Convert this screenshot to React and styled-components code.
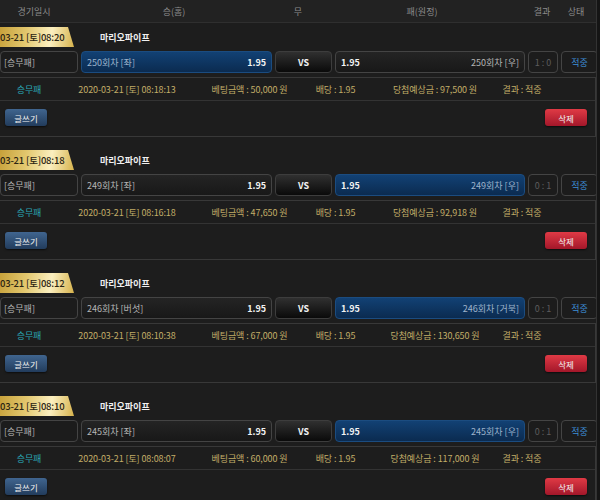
import React from "react";
import styled, { createGlobalStyle } from "styled-components";

const GlobalStyle = createGlobalStyle`
  html, body {
    margin: 0;
    padding: 0;
    background: #151515;
    font-family: "Noto Sans CJK KR", "Noto Sans", sans-serif;
  }
`;

const Page = styled.div`
  width: 596px;
  min-height: 500px;
  background: #1d1d1d;
  border-right: 1px solid #333;
  overflow: hidden;
`;

const Header = styled.div`
  display: grid;
  grid-template-columns: 68px 212px 36px 212px 28px 40px;
  height: 22px;
  align-items: center;
  background: #222;
  border-bottom: 1px solid #2f2f2f;
  font-size: 9px;
  color: #8c8c8c;
  text-align: center;
`;

const List = styled.div`
  display: flex;
  flex-direction: column;
  gap: 13px;
  padding-top: 4px;
`;

const Section = styled.div`
  display: flex;
  flex-direction: column;
  gap: 4px;
`;

const TabRow = styled.div`
  display: flex;
  align-items: center;
  height: 20px;
`;

const DateTab = styled.div`
  width: 74px;
  height: 20px;
  display: flex;
  align-items: center;
  font-size: 9.5px;
  font-weight: 500;
  letter-spacing: -0.2px;
  color: #2b2412;
  white-space: nowrap;
  overflow: hidden;
  clip-path: polygon(0 0, 68px 0, 74px 100%, 0 100%);
  background: linear-gradient(100deg, #c7a13a 0%, #e2c76e 35%, #fbefbf 68%, #d6b24c 100%);
`;

const GameTitle = styled.div`
  margin-left: 26px;
  font-size: 9px;
  font-weight: 700;
  color: #f0f0f0;
`;

const BetRow = styled.div`
  display: grid;
  grid-template-columns: 78px 191px 57px 190px 30px 37px;
  column-gap: 3px;
  height: 22px;
`;

const Cell = styled.div`
  box-sizing: border-box;
  display: flex;
  align-items: center;
  border: 1px solid #444;
  border-radius: 4px;
  background: #1c1c1c;
  font-size: 9px;
  color: #b5b5b5;
  padding: 0 ${(p) => (p.$tight ? "3px" : "5px")};
  white-space: nowrap;
`;

const TeamCell = styled(Cell)`
  justify-content: space-between;
  flex-direction: ${(p) => (p.$away ? "row-reverse" : "row")};
  background: ${(p) =>
    p.$picked
      ? "linear-gradient(to bottom, #124174, #0b2b50)"
      : "linear-gradient(to bottom, #242424, #181818)"};
  border-color: ${(p) => (p.$picked ? "#1b4c80" : "#444")};
  color: ${(p) => (p.$picked ? "#9fb4cc" : "#b5b5b5")};
`;

const Odds = styled.span`
  font-weight: 700;
  color: #f2f2f2;
`;

const VsCell = styled(Cell)`
  justify-content: center;
  font-weight: 700;
  color: #f2f2f2;
  background: linear-gradient(to bottom, #303030, #0a0a0a);
  border-color: #3d3d3d;
`;

const ScoreCell = styled(Cell)`
  justify-content: center;
  padding: 0;
  color: #5c5c5c;
`;

const StatusCell = styled(Cell)`
  justify-content: center;
  padding: 0;
  color: #3d8fd8;
`;

const DetailBox = styled.div`
  border: 1px solid #383838;
  border-left: none;
`;

const InfoRow = styled.div`
  display: grid;
  grid-template-columns: 58px 138px 107px 65px 134px 40px;
  height: 22px;
  align-items: center;
  border-bottom: 1px solid #333;
  font-size: 9px;
  letter-spacing: -0.1px;
  color: #c2ad68;
  text-align: center;
  white-space: nowrap;
`;

const Kind = styled.span`
  color: #2aa7b5;
`;

const ActionRow = styled.div`
  box-sizing: border-box;
  display: flex;
  justify-content: space-between;
  align-items: center;
  height: 35px;
  padding: 0 8px 2px 5px;
`;

const ActionButton = styled.button`
  width: 42px;
  height: 17px;
  border: none;
  border-radius: 3px;
  padding: 0;
  font-family: inherit;
  font-size: 8.5px;
  color: #f2f2f2;
  background: ${(p) =>
    p.$danger
      ? "linear-gradient(to bottom, #e03a45, #a3172a)"
      : "linear-gradient(to bottom, #40658f, #223c5c)"};
  box-shadow: 0 1px 2px rgba(0, 0, 0, 0.6);
`;

const bets = [
  { tab: "03-21 [토]08:20", home: "250회차 [좌]", away: "250회차 [우]", score: "1 : 0", pick: "home", time: "2020-03-21 [토] 08:18:13", amount: "50,000", win: "97,500" },
  { tab: "03-21 [토]08:18", home: "249회차 [좌]", away: "249회차 [우]", score: "0 : 1", pick: "away", time: "2020-03-21 [토] 08:16:18", amount: "47,650", win: "92,918" },
  { tab: "03-21 [토]08:12", home: "246회차 [버섯]", away: "246회차 [거북]", score: "0 : 1", pick: "away", time: "2020-03-21 [토] 08:10:38", amount: "67,000", win: "130,650" },
  { tab: "03-21 [토]08:10", home: "245회차 [좌]", away: "245회차 [우]", score: "0 : 1", pick: "away", time: "2020-03-21 [토] 08:08:07", amount: "60,000", win: "117,000" },
];

const App = () => {
  return (
    <Page>
      <GlobalStyle />
      <Header>
        <span>경기일시</span>
        <span>승(홈)</span>
        <span>무</span>
        <span>패(원정)</span>
        <span>결과</span>
        <span>상태</span>
      </Header>
      <List>
        {bets.map((b) => (
          <Section key={b.tab}>
            <TabRow>
              <DateTab>{b.tab}</DateTab>
              <GameTitle>마리오파이프</GameTitle>
            </TabRow>
            <BetRow>
              <Cell $tight>[승무패]</Cell>
              <TeamCell $picked={b.pick === "home"}>
                <span>{b.home}</span>
                <Odds>1.95</Odds>
              </TeamCell>
              <VsCell>VS</VsCell>
              <TeamCell $away $picked={b.pick === "away"}>
                <span>{b.away}</span>
                <Odds>1.95</Odds>
              </TeamCell>
              <ScoreCell>{b.score}</ScoreCell>
              <StatusCell>적중</StatusCell>
            </BetRow>
            <DetailBox>
              <InfoRow>
                <Kind>승무패</Kind>
                <span>{b.time}</span>
                <span>베팅금액 : {b.amount} 원</span>
                <span>배당 : 1.95</span>
                <span>당첨예상금 : {b.win} 원</span>
                <span>결과 : 적중</span>
              </InfoRow>
              <ActionRow>
                <ActionButton>글쓰기</ActionButton>
                <ActionButton $danger>삭제</ActionButton>
              </ActionRow>
            </DetailBox>
          </Section>
        ))}
      </List>
    </Page>
  );
};

export default App;
